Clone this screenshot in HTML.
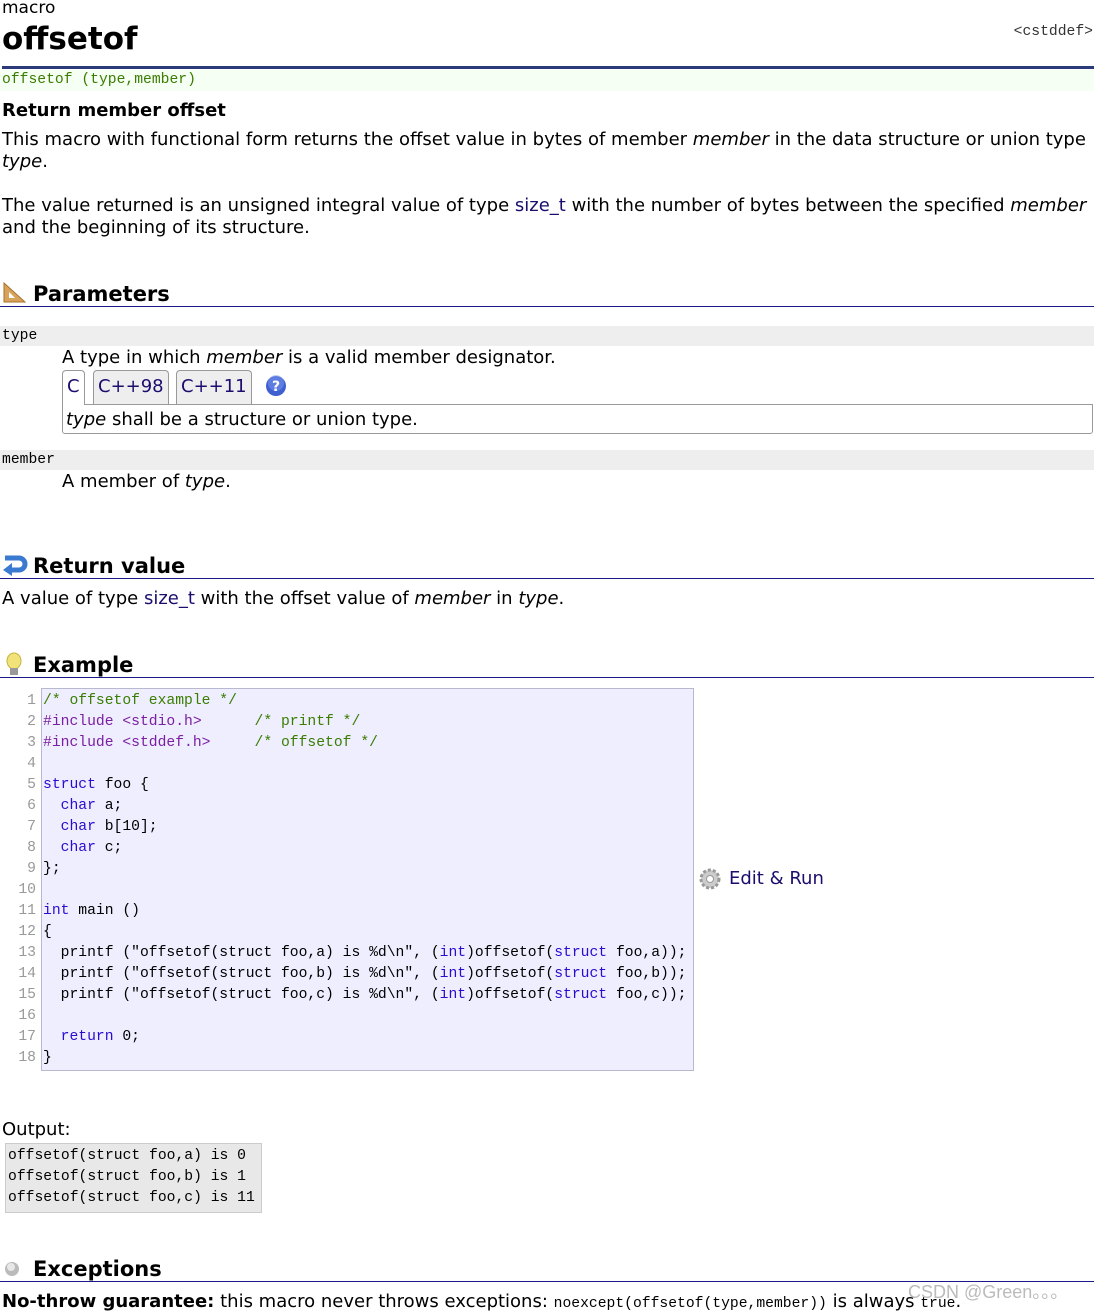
<!DOCTYPE html>
<html><head><meta charset="utf-8"><style>
body{margin:0;width:1095px;height:1308px;overflow:hidden;background:#fff;font-family:"DejaVu Sans","Liberation Sans",sans-serif;font-size:18px;color:#000;position:relative}
.a{position:absolute;white-space:nowrap}
.m{font-family:"Liberation Mono","Noto Serif CJK SC",monospace;font-size:14.7px}
a,.lk{color:#1a0d6e;text-decoration:none}
.h{position:absolute;left:0;width:1094px;border-bottom:1px solid #1a1a8a;height:30px}
.h b{position:absolute;left:33px;top:6px;font-size:21px}
.bar{position:absolute;left:0;width:1094px;height:20px;background:#eee}
.code{position:absolute;left:41px;top:688px;width:651px;height:381px;background:#eef;border:1px solid #b8b8d0}
.ln{position:absolute;left:0;width:36px;text-align:right;color:#999}
.cl{position:absolute;left:43px}
.c{color:#3a7d00}.k{color:#2d0ad0}.p{color:#7b1fa2}.s{color:#000}
.tab{position:absolute;top:370px;height:33px;border:1px solid #999;border-bottom:none;border-radius:4px 4px 0 0;background:#eee;color:#1a0d6e;font-size:18px;line-height:32px;padding:0 4px}
</style></head><body>
<div class="a" style="left:2px;top:-2px;font-size:17px">macro</div>
<div class="a" style="left:2px;top:21px;font-size:31px;font-weight:bold">offsetof</div>
<div class="a m" style="right:2px;top:24px;color:#333">&lt;cstddef&gt;</div>
<div class="a" style="left:2px;top:66px;width:1092px;height:3px;background:#2a3a7a"></div>
<div class="a" style="left:0;top:70px;width:1094px;height:21px;background:#f6fff4"></div>
<div class="a m" style="left:2px;top:72px;color:#3a7d00">offsetof (type,member)</div>
<div class="a" style="left:2px;top:100px;font-weight:bold;font-size:18px">Return member offset</div>
<div class="a" style="left:2px;top:129px">This macro with functional form returns the offset value in bytes of member <i>member</i> in the data structure or union type</div>
<div class="a" style="left:2px;top:151px"><i>type</i>.</div>
<div class="a" style="left:2px;top:195px">The value returned is an unsigned integral value of type <span class="lk">size_t</span> with the number of bytes between the specified <i>member</i></div>
<div class="a" style="left:2px;top:217px">and the beginning of its structure.</div>

<div class="h" style="top:276px"><svg style="position:absolute;left:2px;top:5px" width="24" height="22"><path d="M2 2 L2 21 L23 21 Z" fill="#d7a35a" stroke="#a8712c"/><path d="M7 11 L7 17 L13 17 Z" fill="#fff"/></svg><b>Parameters</b></div>
<div class="bar" style="top:326px"></div>
<div class="a m" style="left:2px;top:328px">type</div>
<div class="a" style="left:62px;top:347px">A type in which <i>member</i> is a valid member designator.</div>
<div class="tab" style="left:62px;background:#fff;height:34px;z-index:2">C</div>
<div class="tab" style="left:93px">C++98</div>
<div class="tab" style="left:176px">C++11</div>
<svg class="a" style="left:265px;top:375px" width="22" height="22"><circle cx="11" cy="11" r="10" fill="#3f5fd0"/><circle cx="11" cy="8" r="8" fill="#7f9bf0" opacity=".5"/><text x="11" y="16" text-anchor="middle" fill="#fff" font-weight="bold" font-size="14" font-family="DejaVu Sans">?</text></svg>
<div class="a" style="left:62px;top:404px;width:1029px;height:28px;border:1px solid #999;border-radius:0 0 3px 3px"></div>
<div class="a" style="left:66px;top:409px"><i>type</i> shall be a structure or union type.</div>
<div class="bar" style="top:450px"></div>
<div class="a m" style="left:2px;top:452px">member</div>
<div class="a" style="left:62px;top:471px">A member of <i>type</i>.</div>

<div class="h" style="top:548px"><svg style="position:absolute;left:2px;top:6px" width="26" height="22"><path d="M3 4 H17 a6 6 0 0 1 0 12 H9" fill="none" stroke="#3a7ad0" stroke-width="5"/><path d="M1 16 L10 9 L10 22 Z" fill="#3a7ad0"/></svg><b>Return value</b></div>
<div class="a" style="left:2px;top:588px">A value of type <span class="lk">size_t</span> with the offset value of <i>member</i> in <i>type</i>.</div>

<div class="h" style="top:647px"><svg style="position:absolute;left:4px;top:5px" width="20" height="26"><ellipse cx="10" cy="9" rx="7" ry="8" fill="#f2e27a" stroke="#c9b23a"/><rect x="6" y="16" width="8" height="7" fill="#999"/></svg><b>Example</b></div>
<div class="code"></div>
<div class="m" style="position:absolute;left:0;top:691px;line-height:21px;width:700px">
<div style="position:relative">
<div class="ln">1<br>2<br>3<br>4<br>5<br>6<br>7<br>8<br>9<br>10<br>11<br>12<br>13<br>14<br>15<br>16<br>17<br>18</div>
<div class="cl" style="white-space:pre"><span class="c">/* offsetof example */</span>
<span class="p">#include &lt;stdio.h&gt;</span>      <span class="c">/* printf */</span>
<span class="p">#include &lt;stddef.h&gt;</span>     <span class="c">/* offsetof */</span>

<span class="k">struct</span> foo {
  <span class="k">char</span> a;
  <span class="k">char</span> b[10];
  <span class="k">char</span> c;
};

<span class="k">int</span> main ()
{
  printf (<span class="s">"offsetof(struct foo,a) is %d\n"</span>, (<span class="k">int</span>)offsetof(<span class="k">struct</span> foo,a));
  printf (<span class="s">"offsetof(struct foo,b) is %d\n"</span>, (<span class="k">int</span>)offsetof(<span class="k">struct</span> foo,b));
  printf (<span class="s">"offsetof(struct foo,c) is %d\n"</span>, (<span class="k">int</span>)offsetof(<span class="k">struct</span> foo,c));

  <span class="k">return</span> 0;
}</div></div></div>
<svg class="a" style="left:699px;top:868px" width="22" height="22"><circle cx="11" cy="11" r="9" fill="#ccc" stroke="#999" stroke-width="3" stroke-dasharray="3 2"/><circle cx="11" cy="11" r="3.5" fill="#fff" stroke="#999"/></svg>
<div class="a lk" style="left:729px;top:868px">Edit &amp; Run</div>

<div class="a" style="left:2px;top:1119px">Output:</div>
<div class="a m" style="left:5px;top:1143px;width:253px;height:66px;background:#e8e8e8;border:1px solid #ccc;line-height:21px;padding-top:2px;padding-left:2px;white-space:pre">offsetof(struct foo,a) is 0
offsetof(struct foo,b) is 1
offsetof(struct foo,c) is 11</div>

<div class="h" style="top:1251px"><svg style="position:absolute;left:4px;top:10px" width="18" height="18"><circle cx="8" cy="8" r="7" fill="#bbb"/><circle cx="7" cy="6" r="4" fill="#e8e8e8"/></svg><b>Exceptions</b></div>
<div class="a" style="left:2px;top:1291px"><b>No-throw guarantee:</b> this macro never throws exceptions: <span class="m">noexcept(offsetof(type,member))</span> is always <span class="m">true</span>.</div>
<div class="a" style="left:908px;top:1278px;color:#bbb;font-size:18px;font-family:'Liberation Sans',sans-serif">CSDN @Green。。。</div>
</body></html>
